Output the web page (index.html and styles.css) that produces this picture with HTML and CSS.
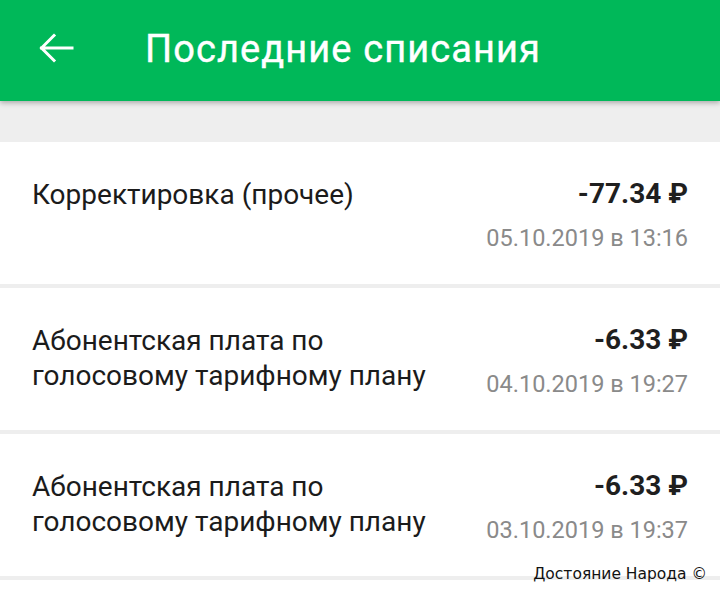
FILE: index.html
```html
<!DOCTYPE html>
<html lang="ru">
<head>
<meta charset="utf-8">
<link rel="stylesheet" href="styles.css">
</head>
<body>
<div class="screen">
  <header class="toolbar">
    <svg class="back" width="48" height="48" viewBox="0 0 48 48" aria-hidden="true">
      <path d="M9.5 24 L40 24 M9.5 24 L22 11.5 M9.5 24 L22 36.5" fill="none" stroke="#fff" stroke-width="3" stroke-linecap="square" stroke-linejoin="miter"/>
    </svg>
    <h1 class="title">Последние списания</h1>
  </header>
  <div class="spacer"></div>
  <ul class="list">
    <li class="card">
      <div class="name">Корректировка (прочее)</div>
      <div class="meta">
        <div class="amount">-77.34 ₽</div>
        <div class="date">05.10.2019 в 13:16</div>
      </div>
    </li>
    <li class="card">
      <div class="name">Абонентская плата по<br>голосовому тарифному плану</div>
      <div class="meta">
        <div class="amount">-6.33 ₽</div>
        <div class="date">04.10.2019 в 19:27</div>
      </div>
    </li>
    <li class="card">
      <div class="name">Абонентская плата по<br>голосовому тарифному плану</div>
      <div class="meta">
        <div class="amount">-6.33 ₽</div>
        <div class="date">03.10.2019 в 19:37</div>
      </div>
    </li>
    <li class="card card-empty"></li>
  </ul>
  <div class="watermark">Достояние Народа ©</div>
</div>
</body>
</html>
```
FILE: styles.css
```css
* { box-sizing: border-box; }
html, body { margin: 0; padding: 0; }
body {
  background: #eeeeee;
  font-family: Roboto, "Noto Sans", sans-serif;
}
.screen {
  position: relative;
  width: 720px;
  height: 592px;
  overflow: hidden;
  background: #eeeeee;
}
.toolbar {
  position: relative;
  z-index: 2;
  height: 101px;
  background: #00b859;
  display: flex;
  align-items: center;
  padding-left: 32px;
  box-shadow: 0 2px 5px rgba(0,0,0,0.28);
}
.back {
  display: block;
  flex: none;
  margin-top: -5px;
}
.title {
  margin: -4px 0 0 65px;
  color: #fff;
  font-size: 38px;
  font-weight: 400;
  line-height: 40px;
  letter-spacing: 1.1px;
  -webkit-text-stroke: 0.4px #fff;
}
.spacer { height: 41px; }
.list {
  list-style: none;
  margin: 0;
  padding: 0;
  display: flex;
  flex-direction: column;
  gap: 4px;
}
.card {
  background: #ffffff;
  display: flex;
  justify-content: space-between;
  align-items: flex-start;
  padding: 35px 32px 31px 32px;
}
.card-empty { height: 60px; }
.name {
  font-size: 28px;
  line-height: 35px;
  color: #1b1b1b;
}
.meta {
  text-align: right;
  flex: none;
}
.amount {
  font-size: 28px;
  line-height: 34px;
  font-weight: 700;
  color: #1f1f1f;
}
.date {
  margin-top: 12px;
  font-size: 23.5px;
  line-height: 30px;
  color: #8a8a8a;
}
.watermark {
  position: absolute;
  right: 13px;
  bottom: 8px;
  font-family: "DejaVu Sans", sans-serif;
  font-size: 15.5px;
  line-height: 20px;
  color: #111;
  z-index: 3;
}
```
